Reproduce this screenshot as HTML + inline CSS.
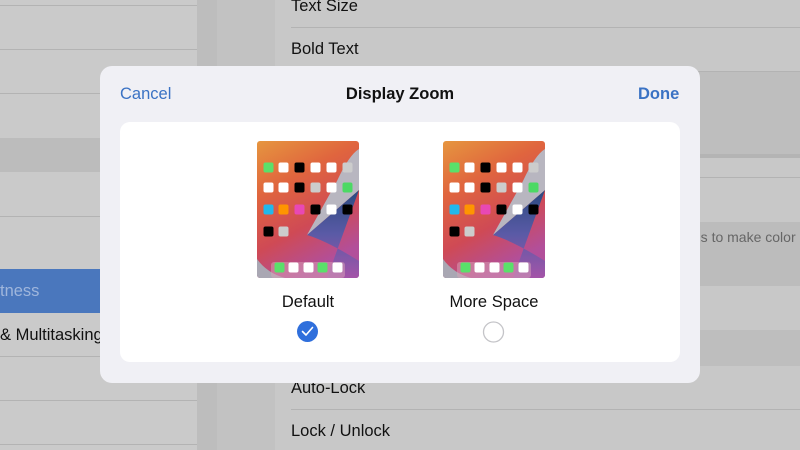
<!DOCTYPE html>
<html><head><style>
*{margin:0;padding:0;box-sizing:border-box}
body{width:800px;height:450px;overflow:hidden;background:#c5c5c5;font-family:"Liberation Sans",sans-serif;position:relative}
.a{position:absolute;white-space:nowrap}
.t{position:absolute;font-size:16.5px;color:#111;white-space:nowrap}
.ln{position:absolute;height:1px;background:#b3b3b3}
</style></head><body>
<div class="a" style="left:0;top:0;width:197px;height:450px;background:#cacaca"></div>
<div class="ln" style="left:0;top:5px;width:197px"></div>
<div class="ln" style="left:0;top:49px;width:197px"></div>
<div class="ln" style="left:0;top:93px;width:197px"></div>
<div class="a" style="left:0;top:138px;width:197px;height:34px;background:#bcbcbc"></div>
<div class="ln" style="left:0;top:216px;width:197px"></div>
<div class="a" style="left:0;top:269px;width:100px;height:44px;background:#4a77bd"></div>
<div class="t" style="left:0;top:282px;color:#9fb6dc">tness</div>
<div class="t" style="left:0;top:326px">&amp; Multitasking</div>
<div class="ln" style="left:0;top:356px;width:197px"></div>
<div class="ln" style="left:0;top:400px;width:197px"></div>
<div class="ln" style="left:0;top:444px;width:197px"></div>
<div class="a" style="left:197px;top:0;width:20px;height:450px;background:#bdbdbd"></div>
<div class="a" style="left:217px;top:0;width:58px;height:450px;background:#c2c2c2"></div>
<div class="a" style="left:275px;top:0;width:525px;height:450px;background:#c8c8c8"></div>
<div class="t" style="left:291px;top:-3px">Text Size</div>
<div class="ln" style="left:291px;top:27px;width:509px"></div>
<div class="t" style="left:291px;top:40px">Bold Text</div>
<div class="ln" style="left:275px;top:71px;width:525px"></div>
<div class="a" style="left:275px;top:72px;width:525px;height:82px;background:#bebebe"></div>
<div class="a" style="left:275px;top:154px;width:525px;height:4px;background:#b4b4b4"></div>
<div class="ln" style="left:275px;top:177px;width:525px"></div>
<div class="a" style="left:275px;top:222px;width:525px;height:64px;background:#bcbcbc"></div>
<div class="t" style="left:682px;top:229px;font-size:14px;color:#666">ions to make color</div>
<div class="a" style="left:275px;top:330px;width:525px;height:36px;background:#bebebe"></div>
<div class="t" style="left:291px;top:379px">Auto-Lock</div>
<div class="ln" style="left:291px;top:409px;width:509px"></div>
<div class="t" style="left:291px;top:422px">Lock / Unlock</div>
<div class="a" style="left:100px;top:66px;width:600px;height:317px;background:#f0f0f5;border-radius:12px"></div>
<div class="a" style="left:120px;top:85px;font-size:16.5px;color:#3a72c4">Cancel</div>
<div class="a" style="left:0;width:800px;top:85px;text-align:center;font-size:16.5px;font-weight:bold;color:#111">Display Zoom</div>
<div class="a" style="left:638px;top:85px;font-size:16.5px;font-weight:bold;color:#3a72c4">Done</div>
<div class="a" style="left:120px;top:122px;width:560px;height:240px;background:#fff;border-radius:10px"></div>

<svg class="a" style="left:0;top:0" width="800" height="450">
<defs>
<linearGradient id="g" x1="0" y1="0" x2="0.4" y2="1">
<stop offset="0" stop-color="#e6963f"/><stop offset="0.35" stop-color="#e0653e"/><stop offset="0.7" stop-color="#cf4a55"/><stop offset="1" stop-color="#b24f9a"/></linearGradient>
<linearGradient id="b" x1="0" y1="0" x2="0" y2="1"><stop offset="0" stop-color="#2b4a80"/><stop offset="0.5" stop-color="#5a5aa6"/><stop offset="1" stop-color="#a454a8"/></linearGradient>
<clipPath id="c"><rect width="102" height="137" rx="3"/></clipPath>
<g id="ph">
<g clip-path="url(#c)">
<rect width="102" height="137" fill="url(#g)"/>
<path d="M102 49 L50 94 Q70 100 102 120 L102 137 L70 137 Z" fill="url(#b)"/>
<path d="M102 8 Q92 14 80 40 L50 94 L102 49Z" fill="#b8b6c0"/>
<path d="M0 118 Q10 132 28 137 L0 137Z" fill="#a9a7b3"/>
<rect x="14" y="121" width="74" height="16" rx="3" fill="#d9a3b8" opacity="0.5"/>
</g>
</g>
<g id="ic">
<rect x="6.5" y="21.5" width="10" height="10" rx="2" fill="#5ae06a"/><rect x="21.5" y="21.5" width="10" height="10" rx="2" fill="#fff"/><rect x="37.5" y="21.5" width="10" height="10" rx="2" fill="#000"/><rect x="53.5" y="21.5" width="10" height="10" rx="2" fill="#fff"/><rect x="69.5" y="21.5" width="10" height="10" rx="2" fill="#fff"/><rect x="85.5" y="21.5" width="10" height="10" rx="2" fill="#ccc"/>
<rect x="6.5" y="41.5" width="10" height="10" rx="2" fill="#fff"/><rect x="21.5" y="41.5" width="10" height="10" rx="2" fill="#fff"/><rect x="37.5" y="41.5" width="10" height="10" rx="2" fill="#000"/><rect x="53.5" y="41.5" width="10" height="10" rx="2" fill="#ccc"/><rect x="69.5" y="41.5" width="10" height="10" rx="2" fill="#fff"/><rect x="85.5" y="41.5" width="10" height="10" rx="2" fill="#4cd964"/>
<rect x="6.5" y="63.5" width="10" height="10" rx="2" fill="#22b8ec"/><rect x="21.5" y="63.5" width="10" height="10" rx="2" fill="#ff9500"/><rect x="37.5" y="63.5" width="10" height="10" rx="2" fill="#e848b4"/><rect x="53.5" y="63.5" width="10" height="10" rx="2" fill="#000"/><rect x="69.5" y="63.5" width="10" height="10" rx="2" fill="#fff"/><rect x="85.5" y="63.5" width="10" height="10" rx="2" fill="#000"/>
<rect x="6.5" y="85.5" width="10" height="10" rx="2" fill="#000"/><rect x="21.5" y="85.5" width="10" height="10" rx="2" fill="#ccc"/>
<rect x="17.5" y="121.5" width="10" height="10" rx="2" fill="#5ae06a"/><rect x="31.5" y="121.5" width="10" height="10" rx="2" fill="#fff"/><rect x="46.5" y="121.5" width="10" height="10" rx="2" fill="#fff"/><rect x="60.5" y="121.5" width="10" height="10" rx="2" fill="#5ae06a"/><rect x="75.5" y="121.5" width="10" height="10" rx="2" fill="#fff"/>
</g>
</defs>
<g transform="translate(257,141)"><use href="#ph"/><use href="#ic"/></g>
<g transform="translate(443,141)"><use href="#ph"/><use href="#ic"/></g>
<circle cx="307.5" cy="331.5" r="10.5" fill="#2f6fdc"/>
<path d="M302.5 331.5 L306 335 L312.5 327.5" stroke="#fff" stroke-width="1.6" fill="none" stroke-linecap="round" stroke-linejoin="round"/>
<circle cx="493.5" cy="332" r="10" fill="none" stroke="#c4c4c8" stroke-width="1.3"/>
</svg>
<div class="a" style="left:208px;width:200px;top:293px;text-align:center;font-size:16.5px;color:#111">Default</div>
<div class="a" style="left:394px;width:200px;top:293px;text-align:center;font-size:16.5px;color:#111">More Space</div>
</body></html>
